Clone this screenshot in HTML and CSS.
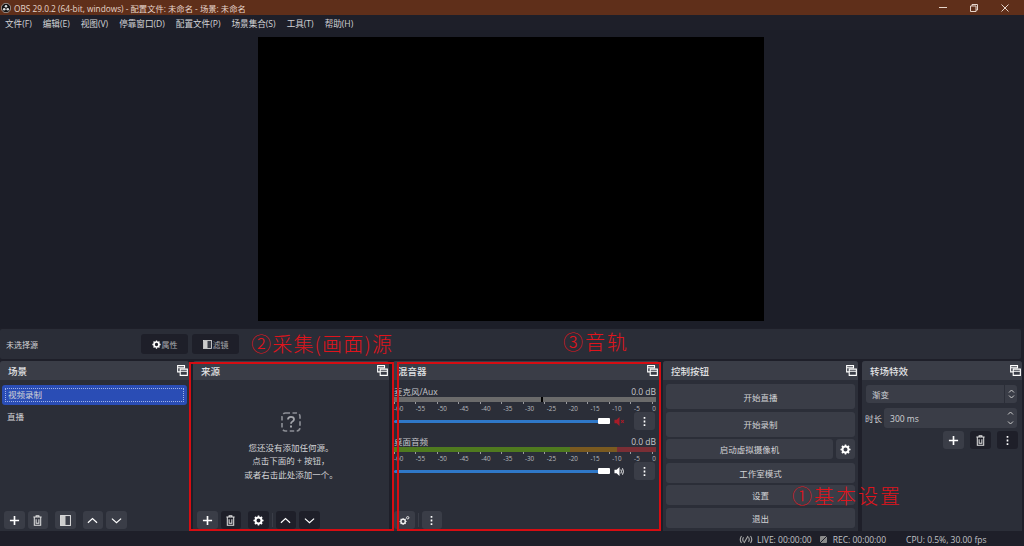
FILE: index.html
```html
<!DOCTYPE html>
<html lang="zh-CN">
<head>
    <meta charset="UTF-8">
    <title>OBS 29.0.2</title>
    <link rel="stylesheet" href="styles.css">
</head>
<body>
<svg class="defs" width="0" height="0">
    <symbol id="i-float" viewBox="0 0 12 12"><path d="M.7 .7h7.5v2.3H.7zM.7 3v4.5h2.5M3.5 4.5h7.8v6.8H3.5zM3.5 4.5v2.3h7.8" fill="none" stroke="#fff" stroke-width="1.2"/></symbol>
    <symbol id="i-plus" viewBox="0 0 12 12"><path d="M6 1v10M1 6h10" stroke="#fff" stroke-width="1.8"/></symbol>
    <symbol id="i-trash" viewBox="0 0 12 12"><path d="M1.5 2.2h9M4.5 2V.9h3V2M2.5 2.5v8.7h7V2.5M4.5 4.5v4.6h3V4.5" fill="none" stroke="#e4e4e4" stroke-width="1.1"/></symbol>
    <symbol id="i-filter" viewBox="0 0 12 12"><rect x=".6" y=".6" width="10.8" height="10.8" fill="#3a3d47" stroke="#ddd" stroke-width="1.1"/><rect x="1" y="1" width="5" height="10" fill="#ccc"/></symbol>
    <symbol id="i-up" viewBox="0 0 12 12"><path d="M1 8.500 6 4l5 4.500" fill="none" stroke="#fff" stroke-width="1.300"/></symbol>
    <symbol id="i-down" viewBox="0 0 12 12"><path d="M1 4 6 8.500 11 4" fill="none" stroke="#fff" stroke-width="1.300"/></symbol>
    <symbol id="i-gear" viewBox="0 0 12 12"><circle cx="6" cy="6" r="3.3" fill="none" stroke="#fff" stroke-width="2.2"/><path d="M6 .5v2M6 9.5v2M.5 6h2M9.5 6h2M2.1 2.1l1.4 1.4M8.5 8.5l1.4 1.4M2.1 9.9l1.4-1.4M8.5 3.5l1.4-1.4" stroke="#fff" stroke-width="1.7"/></symbol>
    <symbol id="i-dots" viewBox="0 0 12 12"><path d="M6 1v2M6 5v2M6 9v2" stroke="#fff" stroke-width="1.8"/></symbol>
    <symbol id="i-gears" viewBox="0 0 12 12"><circle cx="4.5" cy="7" r="2.4" fill="none" stroke="#eee" stroke-width="1.6"/><path d="M4.5 3.2v1M4.5 9.8v1M.7 7h1M7.3 7h1M1.8 4.3l.8.8M6.4 8.9l.8.8M1.8 9.7l.8-.8M6.4 5.1l.8-.8" stroke="#eee" stroke-width="1.1"/><circle cx="9.5" cy="3" r="1.3" fill="none" stroke="#eee" stroke-width="1"/></symbol>
    <symbol id="i-speaker" viewBox="0 0 12 12"><path d="M.5 4h2.3L6 1.2v9.6L2.8 8H.5z" fill="#fff"/><path d="M7.5 3.8q1.2 2.2 0 4.4M9.3 2.5q2 3.5 0 7" fill="none" stroke="#fff" stroke-width="1"/></symbol>
    <symbol id="i-muted" viewBox="0 0 12 12"><path d="M.5 4h2.3L6 1.2v9.6L2.8 8H.5z" fill="#a81c28"/><path d="M7.8 4.4l3 3.2M10.8 4.4l-3 3.2" stroke="#a81c28" stroke-width="1.1"/></symbol>
</svg>

<div class="titlebar">
    <svg class="logo" width="10" height="10" viewBox="0 0 10 10"><circle cx="5" cy="5" r="4.7" fill="#111" stroke="#ddd" stroke-width=".6"/><circle cx="5" cy="3.2" r="1.3" fill="#ddd"/><circle cx="3.2" cy="6.2" r="1.3" fill="#ddd"/><circle cx="6.8" cy="6.2" r="1.3" fill="#ddd"/></svg>
    <span class="title-text">OBS 29.0.2 (64-bit, windows) - 配置文件: 未命名 - 场景: 未命名</span>
    <div class="winbtns">
        <svg width="8" height="8" viewBox="0 0 8 8"><path d="M0 3.5h8" stroke="#e6d5cb"/></svg>
        <svg width="8" height="8" viewBox="0 0 8 8"><path d="M.5 2h5.500v5.500H.5zM2 2V.5h5.500V6H6" fill="none" stroke="#e6d5cb"/></svg>
        <svg width="8" height="8" viewBox="0 0 8 8"><path d="M.5 .5l7 7M7.500 .5l-7 7" stroke="#e6d5cb"/></svg>
    </div>
</div>

<div class="menubar">
    <span>文件(F)</span><span>编辑(E)</span><span>视图(V)</span><span>停靠窗口(D)</span><span>配置文件(P)</span><span>场景集合(S)</span><span>工具(T)</span><span>帮助(H)</span>
</div>

<div class="preview"><div class="canvas"></div></div>

<div class="contextbar">
    <span class="no-source">未选择源</span>
    <button class="ctx-btn"><svg width="9" height="9"><use href="#i-gear"/></svg>属性</button>
    <button class="ctx-btn"><svg width="9" height="9"><use href="#i-filter"/></svg>滤镜</button>
</div>

<div class="docks">
    <section class="dock">
        <header class="dock-title">场景<svg width="11" height="11"><use href="#i-float"/></svg></header>
        <div class="dock-body">
            <ul class="scene-list">
                <li class="selected"><span>视频录制</span></li>
                <li><span>直播</span></li>
            </ul>
            <div class="toolbar">
                <button class="tool"><svg width="11" height="11"><use href="#i-plus"/></svg></button>
                <button class="tool"><svg width="11" height="11"><use href="#i-trash"/></svg></button>
                <i class="tb-gap"></i>
                <button class="tool"><svg width="11" height="11"><use href="#i-filter"/></svg></button>
                <i class="tb-gap"></i>
                <button class="tool"><svg width="11" height="11"><use href="#i-up"/></svg></button>
                <button class="tool"><svg width="11" height="11"><use href="#i-down"/></svg></button>
            </div>
        </div>
    </section>

    <section class="dock">
        <header class="dock-title">来源<svg width="11" height="11"><use href="#i-float"/></svg></header>
        <div class="dock-body">
            <div class="empty">
                <svg width="20" height="20" viewBox="0 0 20 20"><rect x="1" y="1" width="18" height="18" rx="3.500" fill="none" stroke="#8d8f96" stroke-width="1.600" stroke-dasharray="4.500 2.500"/><path d="M7 7.500q0-2.700 3-2.700t3 2.500q0 1.500-1.500 2.200t-1.500 2.200" fill="none" stroke="#a4a6ac" stroke-width="1.800"/><rect x="9" y="13.500" width="2" height="2" fill="#a4a6ac"/></svg>
                <p>您还没有添加任何源。<br>点击下面的 + 按钮，<br>或者右击此处添加一个。</p>
            </div>
            <div class="toolbar">
                <button class="tool"><svg width="11" height="11"><use href="#i-plus"/></svg></button>
                <button class="tool dark"><svg width="11" height="11"><use href="#i-trash"/></svg></button>
                <i class="tb-gap"></i>
                <button class="tool dark"><svg width="11" height="11"><use href="#i-gear"/></svg></button>
                <i class="tb-gap line"></i>
                <button class="tool dark"><svg width="11" height="11"><use href="#i-up"/></svg></button>
                <button class="tool dark"><svg width="11" height="11"><use href="#i-down"/></svg></button>
            </div>
        </div>
    </section>

    <section class="dock">
        <header class="dock-title mixer-title">混音器<svg width="11" height="11"><use href="#i-float"/></svg></header>
        <div class="dock-body">
            <div class="channel">
                <div class="ch-head"><span>麦克风/Aux</span><span>0.0 dB</span></div>
                <div class="meter muted"><i class="peak"></i></div>
                <div class="scale"><span>-60</span><span>-55</span><span>-50</span><span>-45</span><span>-40</span><span>-35</span><span>-30</span><span>-25</span><span>-20</span><span>-15</span><span>-10</span><span>-5</span><span>0</span></div>
                <div class="ch-ctl">
                    <div class="slider"><i></i></div>
                    <svg width="11" height="11"><use href="#i-muted"/></svg>
                    <button class="tool"><svg width="11" height="11"><use href="#i-dots"/></svg></button>
                </div>
            </div>
            <div class="channel">
                <div class="ch-head"><span>桌面音频</span><span>0.0 dB</span></div>
                <div class="meter"></div>
                <div class="scale"><span>-60</span><span>-55</span><span>-50</span><span>-45</span><span>-40</span><span>-35</span><span>-30</span><span>-25</span><span>-20</span><span>-15</span><span>-10</span><span>-5</span><span>0</span></div>
                <div class="ch-ctl">
                    <div class="slider"><i></i></div>
                    <svg width="11" height="11"><use href="#i-speaker"/></svg>
                    <button class="tool"><svg width="11" height="11"><use href="#i-dots"/></svg></button>
                </div>
            </div>
            <div class="toolbar mixer-tools">
                <button class="tool"><svg width="11" height="11"><use href="#i-gears"/></svg></button>
                <i class="tb-gap line"></i>
                <button class="tool"><svg width="11" height="11"><use href="#i-dots"/></svg></button>
            </div>
        </div>
    </section>

    <section class="dock">
        <header class="dock-title">控制按钮<svg width="11" height="11"><use href="#i-float"/></svg></header>
        <div class="dock-body controls">
            <button class="ctl tall">开始直播</button>
            <button class="ctl tall">开始录制</button>
            <div class="ctl-row">
                <button class="ctl">启动虚拟摄像机</button>
                <button class="ctl cam"><svg width="11" height="11"><use href="#i-gear"/></svg></button>
            </div>
            <button class="ctl">工作室模式</button>
            <button class="ctl">设置</button>
            <button class="ctl">退出</button>
        </div>
    </section>

    <section class="dock">
        <header class="dock-title">转场特效<svg width="11" height="11"><use href="#i-float"/></svg></header>
        <div class="dock-body transitions">
            <div class="combo">
                <span>渐变</span>
                <b class="arrows"><svg width="7" height="12" viewBox="0 0 7 12"><path d="M1 4.500l2.500-2.500L6 4.500M1 7.500L3.500 10 6 7.500" fill="none" stroke="#ccc"/></svg></b>
            </div>
            <div class="duration">
                <label>时长</label>
                <div class="spin">
                    <span>300 ms</span>
                    <svg width="7" height="16" viewBox="0 0 7 16"><path d="M1 4.500l2.500-2.500L6 4.500M1 11.500L3.500 14 6 11.500" fill="none" stroke="#ccc"/></svg>
                </div>
            </div>
            <div class="trans-tools">
                <button class="tool"><svg width="11" height="11"><use href="#i-plus"/></svg></button>
                <button class="tool dark"><svg width="11" height="11"><use href="#i-trash"/></svg></button>
                <button class="tool dark"><svg width="11" height="11"><use href="#i-dots"/></svg></button>
            </div>
        </div>
    </section>
</div>

<div class="statusbar">
    <svg width="14" height="9" viewBox="0 0 14 9"><path d="M2.500 1Q0 4.500 2.500 8M4.500 2.200Q3 4.500 4.500 6.800M11.500 1q2.500 3.500 0 7M9.500 2.200q1.500 2.300 0 4.600M5 8l4-7" fill="none" stroke="#aaa" stroke-width="1.100"/></svg>
    <span class="st-live">LIVE: 00:00:00</span>
    <svg width="7" height="7" viewBox="0 0 7 7"><rect width="7" height="7" rx="1" fill="#8a8a8a"/><path d="M0 7l7-7" stroke="#1e1f29"/></svg>
    <span class="st-rec">REC: 00:00:00</span>
    <span class="st-cpu">CPU: 0.5%, 30.00 fps</span>
</div>

<!-- annotations drawn on top of the screenshot -->
<div class="mark mark-sources"></div>
<div class="mark mark-mixer"></div>
<div class="note note-sources">②采集(画面)源</div>
<div class="note note-tracks">③音轨</div>
<div class="note note-settings">①基本设置</div>
</body>
</html>
```

FILE: styles.css
```css
* {
    box-sizing: border-box;
}
html, body {
    margin: 0;
    height: 100%;
}
body {
    position: relative;
    width: 1024px;
    height: 546px;
    overflow: hidden;
    display: flex;
    flex-direction: column;
    background: #1e1f29;
    color: #d2d3d6;
    font: 8px "Open Sans", "Noto Sans CJK SC", sans-serif;
}
.defs {
    position: absolute;
}
button {
    border: 0;
    padding: 0;
    color: inherit;
    font: inherit;
}

.titlebar {
    flex: 0 0 15px;
    display: flex;
    align-items: center;
    padding-left: 1px;
    background: #5f2f1a;
    color: #e6d5cb;
    font-size: 8.300px;
}
.logo {
    margin-right: 3px;
}
.winbtns {
    margin-left: auto;
    display: flex;
    gap: 23px;
    padding-right: 15px;
}

.menubar {
    flex: 0 0 15px;
    display: flex;
    align-items: center;
    gap: 11px;
    padding: 1px 0 0 5px;
    background: #1e1f29;
    font-size: 8.600px;
}

.preview {
    flex: 0 0 298px;
    display: flex;
    justify-content: center;
    padding: 7px 2px 0 0;
    background: #1c1e28;
}
.canvas {
    width: 506px;
    height: 284px;
    background: #000;
}

.contextbar {
    flex: 0 0 30px;
    display: flex;
    align-items: center;
    gap: 4px;
    margin: 1px 3px 0 0;
    padding-left: 6px;
    background: #2a2d37;
    border-radius: 2px;
}
.no-source {
    width: 131px;
}
.ctx-btn {
    width: 47px;
    height: 20px;
    display: flex;
    align-items: center;
    justify-content: center;
    gap: 1px;
    background: #1e1f29;
    border-radius: 3px;
    color: #a9abb0;
}

.docks {
    flex: 0 0 170px;
    display: grid;
    grid-template-columns: 189px 196px 266px 195px 160px;
    column-gap: 4px;
    margin-top: 2px;
}
.dock {
    display: flex;
    flex-direction: column;
    background: #2b2e38;
    border-radius: 3px 3px 0 0;
    min-width: 0;
}
.dock-title {
    flex: 0 0 19px;
    display: flex;
    align-items: center;
    justify-content: space-between;
    padding: 0 1px 0 8px;
    background: #3a3d47;
    border-radius: 3px 3px 0 0;
    font-size: 9.500px;
    font-weight: 500;
    color: #e2e3e5;
}
.mixer-title {
    padding-left: 5px;
}
.dock-body {
    position: relative;
    flex: 1;
    display: flex;
    flex-direction: column;
    min-height: 0;
}

.scene-list {
    list-style: none;
    margin: 5px 2px 0;
    padding: 0;
    font-size: 8.500px;
}
.scene-list li {
    height: 20px;
    margin-bottom: 2px;
    padding: 3px;
    display: flex;
}
.scene-list span {
    flex: 1;
    padding-left: 2px;
    line-height: 13px;
}
.scene-list .selected {
    background: #2a4db5;
    border-radius: 3px;
}
.scene-list .selected span {
    border: 1px dotted #9fb2e8;
    line-height: 11px;
}

.toolbar {
    position: absolute;
    left: 4px;
    bottom: 2px;
    display: flex;
    gap: 3px;
}
.toolbar .tool {
    width: 20.500px;
}
.mixer-tools {
    left: 1px;
}
.tool {
    width: 21px;
    height: 18px;
    display: flex;
    align-items: center;
    justify-content: center;
    background: #3a3d47;
    border-radius: 3px;
}
.tool.dark {
    background: #1e1f29;
}
.tb-gap {
    width: 1px;
}
.tb-gap.line {
    margin: 2px 0;
    background: #3a3d47;
}

.empty {
    display: flex;
    flex-direction: column;
    align-items: center;
    padding-top: 32px;
    text-align: center;
    font-size: 8.500px;
}
.empty p {
    margin: 9px 0 0;
    line-height: 13.300px;
}

.channel {
    padding: 4px 3px 0 1px;
    height: 50px;
}
.ch-head {
    display: flex;
    justify-content: space-between;
    height: 13px;
    line-height: 16px;
    font-size: 8.500px;
    color: #c6c7cb;
}
.meter {
    height: 5px;
    background: linear-gradient(90deg, #4f7a1f 0 67%, #7a5a20 67% 85%, #7a2e35 85%);
}
.meter.muted {
    position: relative;
    background: #6b6b6b;
}
.peak {
    position: absolute;
    left: 147px;
    top: 0;
    width: 2px;
    height: 5px;
    background: #000;
}
.scale {
    display: flex;
    justify-content: space-between;
    height: 9px;
    padding-top: 3px;
    line-height: 7px;
    font-size: 6.300px;
    color: #b8b9bd;
    background: repeating-linear-gradient(90deg, #9a9ba0 0 1px, transparent 1px 21.500px) 0 0 / 100% 2px no-repeat;
}
.ch-ctl {
    display: flex;
    align-items: center;
    margin-top: 1px;
}
.ch-ctl svg {
    flex: none;
}
.slider {
    position: relative;
    width: 216px;
    height: 3px;
    margin-right: 4px;
    background: #2f78c8;
    border-radius: 2px;
}
.slider i {
    position: absolute;
    right: 0;
    top: -1.500px;
    width: 12px;
    height: 6px;
    background: #fff;
    border-radius: 1px;
}
.ch-ctl .tool {
    margin-left: 9px;
}

.controls {
    gap: 2.500px;
    padding: 4px 3px 0;
    font-size: 8.500px;
}
.ctl {
    flex: 1;
    height: 20px;
    min-height: 20px;
    background: #3a3d47;
    border-radius: 3px;
    color: #d2d3d6;
}
.controls > .ctl {
    flex: none;
}
.controls > .ctl.tall {
    height: 25px;
}
.ctl-row {
    display: flex;
    gap: 3px;
    height: 21px;
}
.ctl.cam {
    flex: 0 0 19px;
    display: flex;
    align-items: center;
    justify-content: center;
}

.transitions {
    padding: 5px 5px 0 3px;
    font-size: 8.500px;
}
.combo {
    height: 18px;
    margin-left: 1px;
    display: flex;
    align-items: center;
    justify-content: space-between;
    padding-left: 6px;
    background: #3a3d47;
    border-radius: 3px;
}
.arrows {
    width: 13px;
    height: 18px;
    display: flex;
    align-items: center;
    justify-content: center;
    border-left: 1px solid #2b2e38;
}
.duration {
    display: flex;
    align-items: center;
    gap: 2px;
    margin-top: 5px;
}
.spin {
    flex: 1;
    height: 20px;
    display: flex;
    align-items: center;
    justify-content: space-between;
    padding: 0 3px 0 6px;
    background: #3a3d47;
    border-radius: 3px;
}
.trans-tools {
    display: flex;
    justify-content: flex-end;
    gap: 6px;
    margin-top: 3px;
    margin-right: -1px;
}

.statusbar {
    flex: 1;
    display: flex;
    align-items: center;
    padding: 2px 0 0 739px;
    color: #c2c3c7;
    font-size: 8.500px;
}
.st-live {
    margin: 0 8px 0 4px;
}
.st-rec {
    margin: 0 20px 0 6px;
}

/* red boxes and notes, they lie over the docks */
.mark {
    position: absolute;
    top: 362px;
    height: 169px;
    border: 2px solid #d60d12;
}
.mark-sources {
    left: 189px;
    width: 205px;
}
.mark-mixer {
    left: 397px;
    width: 264px;
}
.note {
    position: absolute;
    color: #e0141c;
    font: 300 20px "Noto Sans CJK SC", sans-serif;
    line-height: 24px;
    letter-spacing: 2px;
    white-space: nowrap;
}
.note-sources {
    left: 251px;
    top: 332px;
    letter-spacing: 1.200px;
}
.note-tracks {
    left: 563px;
    top: 330px;
}
.note-settings {
    left: 792px;
    top: 484px;
}
```
